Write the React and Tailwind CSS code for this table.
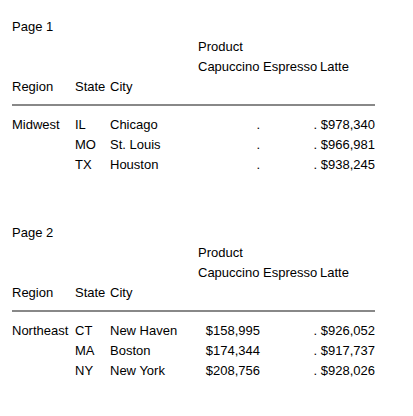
const pages = [
  {
    title: "Page 1",
    region: "Midwest",
    rows: [
      ["IL", "Chicago", ".", ".", "$978,340"],
      ["MO", "St. Louis", ".", ".", "$966,981"],
      ["TX", "Houston", ".", ".", "$938,245"],
    ],
  },
  {
    title: "Page 2",
    region: "Northeast",
    rows: [
      ["CT", "New Haven", "$158,995", ".", "$926,052"],
      ["MA", "Boston", "$174,344", ".", "$917,737"],
      ["NY", "New York", "$208,756", ".", "$928,026"],
    ],
  },
];

const cols = "grid grid-cols-[63px_35px_88px_65px_57px_55px]";

function Page({ page }) {
  return (
    <div className="mb-[48px]">
      <div className="h-5">{page.title}</div>
      <div className={`${cols} h-5`}>
        <div className="col-start-4 col-span-3">Product</div>
      </div>
      <div className={`${cols} h-5`}>
        <div className="col-start-4">Capuccino</div>
        <div>Espresso</div>
        <div>Latte</div>
      </div>
      <div className={`${cols} h-5`}>
        <div>Region</div>
        <div>State</div>
        <div>City</div>
      </div>
      <div className="mt-[7px] mb-[9px] h-[2px] w-[363px] bg-[#888888]" />
      {page.rows.map((r, i) => (
        <div key={i} className={`${cols} h-5`}>
          <div>{i === 0 ? page.region : ""}</div>
          <div>{r[0]}</div>
          <div>{r[1]}</div>
          <div className="pr-[3px] text-right">{r[2]}</div>
          <div className="pr-[3px] text-right">{r[3]}</div>
          <div className="text-right">{r[4]}</div>
        </div>
      ))}
    </div>
  );
}

export default function App() {
  return (
    <div className="min-h-screen bg-white pl-[12px] pt-[17px] font-['Liberation_Sans',Arial,sans-serif] text-[13px] leading-5 text-black">
      {pages.map((p) => (
        <Page key={p.title} page={p} />
      ))}
    </div>
  );
}
